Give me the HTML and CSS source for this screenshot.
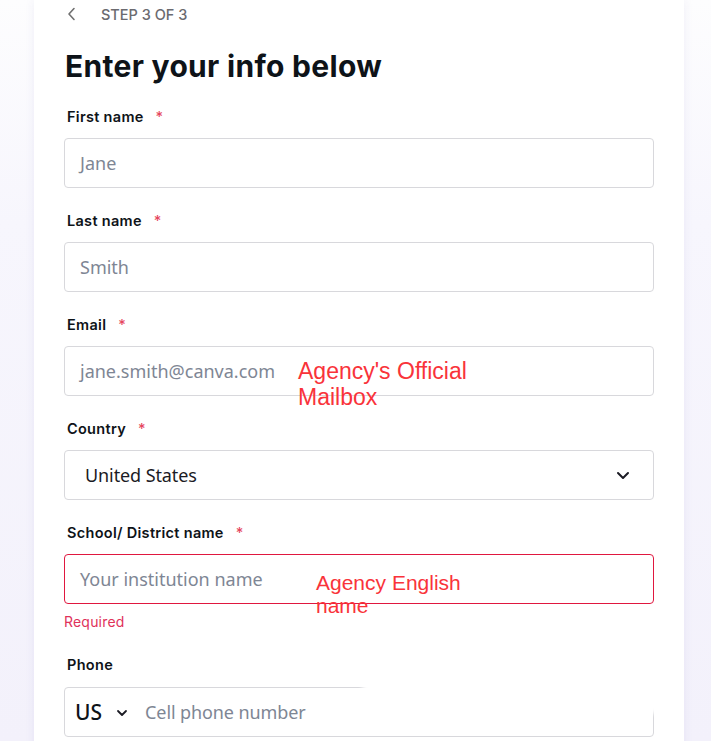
FILE: index.html
```html
<!DOCTYPE html>
<html lang="en">
<head>
<meta charset="utf-8">
<title>Enter your info below</title>
<link rel="stylesheet" href="styles.css">
</head>
<body>
<div class="page">
  <main class="card">
    <div class="topbar">
      <svg class="back" width="10" height="14" viewBox="0 0 10 14"><path d="M7 1.5L2 7l5 5.5" fill="none" stroke="#707070" stroke-width="1.6" stroke-linecap="round" stroke-linejoin="round"/></svg>
      <span class="step">STEP 3 OF 3</span>
    </div>
    <h1 class="title">Enter your info below</h1>

    <div class="field">
      <label class="label">First name <span class="req">*</span></label>
      <div class="input"><span class="ph">Jane</span></div>
    </div>

    <div class="field">
      <label class="label">Last name <span class="req">*</span></label>
      <div class="input"><span class="ph">Smith</span></div>
    </div>

    <div class="field">
      <label class="label">Email <span class="req">*</span></label>
      <div class="input"><span class="ph">jane.smith@canva.com</span>
        <span class="note note-mail">Agency's Official<br>Mailbox</span>
      </div>
    </div>

    <div class="field">
      <label class="label">Country <span class="req">*</span></label>
      <div class="input select"><span class="value">United States</span>
        <svg width="14" height="9" viewBox="0 0 14 9"><path d="M2 2l5 5 5-5" fill="none" stroke="#1b1b24" stroke-width="2" stroke-linecap="round" stroke-linejoin="round"/></svg>
      </div>
    </div>

    <div class="field field-error">
      <label class="label">School/ District name <span class="req">*</span></label>
      <div class="input error"><span class="ph">Your institution name</span>
        <span class="note note-school">Agency English<br>name</span>
      </div>
      <div class="err-msg">Required</div>
    </div>

    <div class="field">
      <label class="label">Phone</label>
      <div class="input phone">
        <span class="cc">US</span>
        <svg class="cc-chev" width="12" height="8" viewBox="0 0 12 8"><path d="M2 2l4 4 4-4" fill="none" stroke="#1b1b24" stroke-width="1.8" stroke-linecap="round" stroke-linejoin="round"/></svg>
        <span class="ph ph-phone">Cell phone number</span>
        <span class="smudge"></span>
      </div>
    </div>
  </main>
</div>
</body>
</html>
```

FILE: styles.css
```css
html, body {
  margin: 0;
  padding: 0;
}
body {
  background: linear-gradient(180deg, #fdfdfe 0%, #f7f6fd 30%, #f3f1fb 100%);
  height: 741px;
  overflow: hidden;
  font-family: "Inter", "Noto Sans", sans-serif;
}
.page {
  padding-left: 34px;
}
.card {
  width: 590px;
  background: #ffffff;
  padding: 0 30px 40px;
  box-shadow: 0 0 10px rgba(70, 60, 150, 0.07);
  min-height: 760px;
}
.topbar {
  height: 28px;
  display: flex;
  align-items: center;
  gap: 24px;
  padding-left: 3px;
}
.back {
  display: block;
}
.step {
  font-size: 14.5px;
  font-weight: 500;
  color: #6b6b70;
  letter-spacing: 0;
}
.title {
  margin: 20px 0 0;
  font-size: 30px;
  line-height: 36px;
  font-weight: 700;
  color: #0e1318;
  letter-spacing: 0.3px;
  padding-left: 1px;
}
.field {
  margin-top: 22px;
}
.title + .field {
  margin-top: 22px;
}
.label {
  display: block;
  height: 22px;
  line-height: 22px;
  font-size: 14.5px;
  font-weight: 600;
  color: #0e1318;
  padding-left: 3px;
  margin-bottom: 10px;
  letter-spacing: 0.3px;
}
.req {
  color: #e5455d;
  margin-left: 8px;
  font-weight: 500;
}
.input {
  position: relative;
  height: 50px;
  box-sizing: border-box;
  border: 1px solid #d8d8dc;
  border-radius: 4px;
  display: flex;
  align-items: center;
  padding-left: 15px;
  font-family: "Noto Sans", sans-serif;
}
.ph {
  font-size: 18px;
  color: #7e8694;
  margin-top: -1px;
}
.select {
  padding-left: 20px;
  padding-right: 23px;
  justify-content: space-between;
}
.value {
  font-size: 18px;
  color: #1b1b24;
  letter-spacing: -0.1px;
}
.error {
  border-color: #e0173f;
}
.field-error {
  padding-bottom: 1px;
}
.err-msg {
  margin-top: 9px;
  font-size: 14px;
  line-height: 18px;
  color: #e0325a;
  font-family: "Inter", "Noto Sans", sans-serif;
  letter-spacing: 0.2px;
}
.field-error + .field .label {
  margin-bottom: 11px;
}
.phone {
  padding-left: 10px;
}
.cc {
  font-size: 21px;
  color: #0e1318;
  font-weight: 500;
}
.cc-chev {
  margin-left: 14px;
  margin-top: 2px;
}
.ph-phone {
  margin-left: 17px;
  letter-spacing: -0.1px;
}
.note {
  position: absolute;
  font-family: "Liberation Sans", Arial, sans-serif;
  color: #f9333a;
}
.note-mail {
  font-size: 23px;
  line-height: 26px;
  left: 233px;
  top: 11px;
}
.note-school {
  font-size: 21px;
  line-height: 23px;
  left: 251px;
  top: 16px;
}
.smudge {
  position: absolute;
  left: 296px;
  top: -6px;
  width: 298px;
  height: 33px;
  background: #ffffff;
  border-radius: 10px;
  filter: blur(2px);
}
```
